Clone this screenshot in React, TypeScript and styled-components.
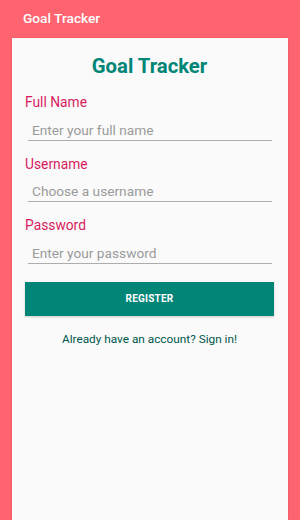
import styled, { createGlobalStyle } from "styled-components";

const GlobalStyle = createGlobalStyle`
  html, body {
    margin: 0;
    padding: 0;
    background: #fe6470;
  }
  * {
    box-sizing: border-box;
  }
`;

const Screen = styled.div`
  width: 300px;
  height: 520px;
  display: flex;
  flex-direction: column;
  background: #fe6470;
  font-family: Roboto, "Liberation Sans", sans-serif;
  overflow: hidden;
`;

const AppBar = styled.div`
  height: 38px;
  flex-shrink: 0;
  display: flex;
  align-items: center;
  padding: 0 0 2px 23px;
  color: #ffffff;
  font-size: 13.7px;
  font-weight: 500;
`;

const Card = styled.div`
  flex: 1;
  margin: 0 12px;
  background: #fafafa;
  box-shadow: 0 0 2px rgba(0, 0, 0, 0.15);
  display: flex;
  flex-direction: column;
  padding: 14px 14px 0 13px;
`;

const Title = styled.h1`
  margin: 0 0 13px;
  text-align: center;
  color: #008577;
  font-size: 20.3px;
  font-weight: 700;
  line-height: 28px;
`;

const Field = styled.div`
  display: flex;
  flex-direction: column;
  margin-bottom: 14px;
`;

const Label = styled.label`
  color: #d81b60;
  font-size: 13.8px;
  line-height: 18px;
`;

const Input = styled.input`
  margin: 7.5px 2px 0 3px;
  border: none;
  border-bottom: 1.5px solid #adadad;
  background: transparent;
  font-family: Roboto, "Liberation Sans", sans-serif;
  font-size: 13.7px;
  line-height: 16px;
  color: #333;
  padding: 3px 4px 2px;
  outline: none;
  &::placeholder {
    color: #9a9a9a;
  }
`;

const RegisterButton = styled.button`
  margin: 4px 0 0 0;
  height: 34px;
  border: none;
  background: #008577;
  color: #ffffff;
  font-family: Roboto, "Liberation Sans", sans-serif;
  font-size: 10px;
  font-weight: 700;
  letter-spacing: 0.2px;
  box-shadow: 0 1px 2px rgba(0, 0, 0, 0.2);
`;

const SignIn = styled.div`
  margin-top: 16px;
  text-align: center;
  color: #00574b;
  font-size: 11.8px;
`;

const fields = [
  { label: "Full Name", placeholder: "Enter your full name", type: "text" },
  { label: "Username", placeholder: "Choose a username", type: "text" },
  { label: "Password", placeholder: "Enter your password", type: "password" },
];

export default function App() {
  return (
    <>
      <GlobalStyle />
      <Screen>
        <AppBar>Goal Tracker</AppBar>
        <Card>
          <Title>Goal Tracker</Title>
          {fields.map((f) => (
            <Field key={f.label}>
              <Label>{f.label}</Label>
              <Input type={f.type} placeholder={f.placeholder} />
            </Field>
          ))}
          <RegisterButton>REGISTER</RegisterButton>
          <SignIn>Already have an account? Sign in!</SignIn>
        </Card>
      </Screen>
    </>
  );
}
